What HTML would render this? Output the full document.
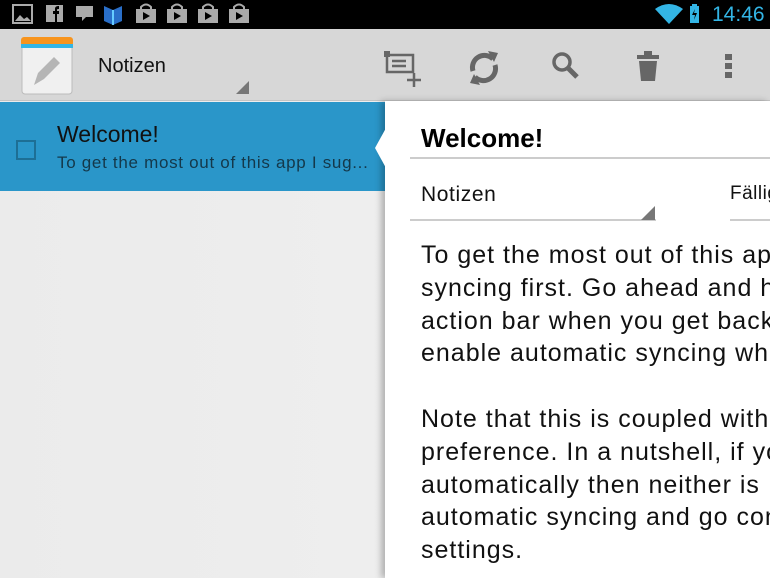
<!DOCTYPE html>
<html><head><meta charset="utf-8"><style>
*{margin:0;padding:0;box-sizing:border-box}
body{width:770px;height:578px;overflow:hidden;position:relative;font-family:"Liberation Sans","DejaVu Sans",sans-serif;background:#ededed}
.sb{position:absolute;left:0;top:0;width:770px;height:29px;background:#000}
.ab{position:absolute;left:0;top:29px;width:770px;height:72px;background:#d7d7d7;border-bottom:1px solid #c4c4c4}
.list{position:absolute;left:0;top:101px;width:385px;height:477px;background:linear-gradient(90deg,#ebebeb,#eeeeee)}
.sel{position:absolute;left:0;top:102px;width:385px;height:89px;background:#2a96c9}
.pane{position:absolute;left:385px;top:101px;width:385px;height:477px;background:#fff;box-shadow:-4px 0 6px rgba(0,0,0,.25);overflow:hidden}
.t{position:absolute;white-space:nowrap}
.body{position:absolute;left:36px;top:138px;font-size:25px;letter-spacing:1px;line-height:32.8px;color:#111;white-space:nowrap}
</style></head><body>
<div class="sb">
<svg width="770" height="29" style="position:absolute;left:0;top:0">
<g fill="none" stroke="#aaa" stroke-width="2"><rect x="13" y="5" width="19" height="18"/></g>
<path d="M15 21l5-6 4 4 3-2 4 4z" fill="#aaa"/>
<rect x="46" y="5" width="17" height="17" fill="#aaa"/><path d="M55 22v-8h-2v-3h2v-2c0-2 1-3 4-3v3h-1c-1 0-1 1-1 1v1h2v3h-2v8z" fill="#000"/>
<path d="M76 6h17v11h-7l-4 4v-4h-6z" fill="#aaa"/>
<path d="M104 6l9 4 9-4v15l-9 4-9-4z" fill="#2a6fc9"/><path d="M113 10v15" stroke="#6cf" stroke-width="2"/>
<g fill="#aaa"><rect x="136" y="9" width="20" height="14"/><rect x="167" y="9" width="20" height="14"/><rect x="198" y="9" width="20" height="14"/><rect x="229" y="9" width="20" height="14"/></g>
<g fill="none" stroke="#aaa" stroke-width="2"><path d="M141 9v-2q5-5 10 0v2M172 9v-2q5-5 10 0v2M203 9v-2q5-5 10 0v2M234 9v-2q5-5 10 0v2"/></g>
<g fill="#000"><path d="M143 12v8l7-4zM174 12v8l7-4zM205 12v8l7-4zM236 12v8l7-4z"/></g>
<path d="M655 9q14-10 28 0l-14 15z" fill="#33b5e5"/>
<rect x="690" y="6" width="9" height="17" fill="#33b5e5"/><rect x="692" y="4" width="5" height="3" fill="#33b5e5"/><path d="M695 9l-3 6h3l-1 5 3-7h-3z" fill="#000"/>
</svg>
<div class="t" style="left:712px;top:3px;font-size:21px;color:#33b5e5">14:46</div>
</div>
<div class="ab">
<svg width="770" height="72" style="position:absolute;left:0;top:0">
<rect x="22" y="10" width="50" height="55" rx="3" fill="#f0f0f0" stroke="#bbb"/>
<rect x="21" y="8" width="52" height="9" rx="3" fill="#f7941d"/><rect x="21" y="15" width="52" height="4" fill="#33b5e5"/>
<path d="M34 56l4-12 16-16 6 6-16 16z" fill="#b5b5b5"/>
<path d="M236 65h13v-13z" fill="#777"/>
<g fill="none" stroke="#666" stroke-width="2.5"><rect x="387" y="26" width="26" height="17"/><path d="M392 32h14M392 37h14M414 44v14M407 51h14"/></g>
<rect x="384" y="22" width="6" height="6" fill="#666"/>
<g fill="none" stroke="#666" stroke-width="5"><path d="M473 42a12 12 0 0 1 20-12M495 36a12 12 0 0 1-20 12"/></g>
<path d="M488 22l10 2-4 9zM480 56l-10-2 4-9z" fill="#666"/>
<circle cx="562" cy="33" r="8" fill="none" stroke="#666" stroke-width="3.5"/><path d="M568 39l9 9" stroke="#666" stroke-width="5"/>
<rect x="637" y="26" width="22" height="4" fill="#666"/><rect x="644" y="22" width="8" height="4" fill="#666"/><path d="M639 32h18l-2 20h-14z" fill="#666"/>
<g fill="#666"><rect x="725" y="25" width="7" height="6"/><rect x="725" y="34" width="7" height="6"/><rect x="725" y="43" width="7" height="6"/></g>
</svg>
<div class="t" style="left:98px;top:26px;font-size:20px;color:#111">Notizen</div>
</div>
<div class="list"></div>
<div class="sel">
<div style="position:absolute;left:16px;top:38px;width:20px;height:20px;border:2px solid #1d6f95"></div>
<div class="t" style="left:57px;top:19px;font-size:23px;color:#111">Welcome!</div>
<div class="t" style="left:57px;top:51px;font-size:17px;letter-spacing:0.7px;color:#14384a">To get the most out of this app I sug...</div>
</div>
<div class="pane">
<div class="t" style="left:36px;top:22px;font-size:26px;font-weight:bold;color:#000">Welcome!</div>
<div style="position:absolute;left:25px;top:56px;width:370px;height:2px;background:#ccc"></div>
<div class="t" style="left:36px;top:82px;font-size:21px;letter-spacing:0.6px;color:#111">Notizen</div>
<div style="position:absolute;left:25px;top:118px;width:246px;height:2px;background:#ccc"></div>
<svg width="20" height="20" style="position:absolute;left:254px;top:102px"><path d="M2 17h14v-14z" fill="#777"/></svg>
<div class="t" style="left:345px;top:82px;font-size:19px;letter-spacing:0.5px;color:#111">Fällig</div>
<div style="position:absolute;left:345px;top:118px;width:60px;height:2px;background:#ccc"></div>
<div class="body">To get the most out of this app I suggest<br>syncing first. Go ahead and hit<br>action bar when you get back<br>enable automatic syncing when<br><br>Note that this is coupled with<br>preference. In a nutshell, if you<br>automatically then neither is<br>automatic syncing and go configure<br>settings.</div>
</div>
<svg width="20" height="40" style="position:absolute;left:368px;top:128px"><path d="M18 0v40l-11-20z" fill="#fff"/></svg>
</body></html>
